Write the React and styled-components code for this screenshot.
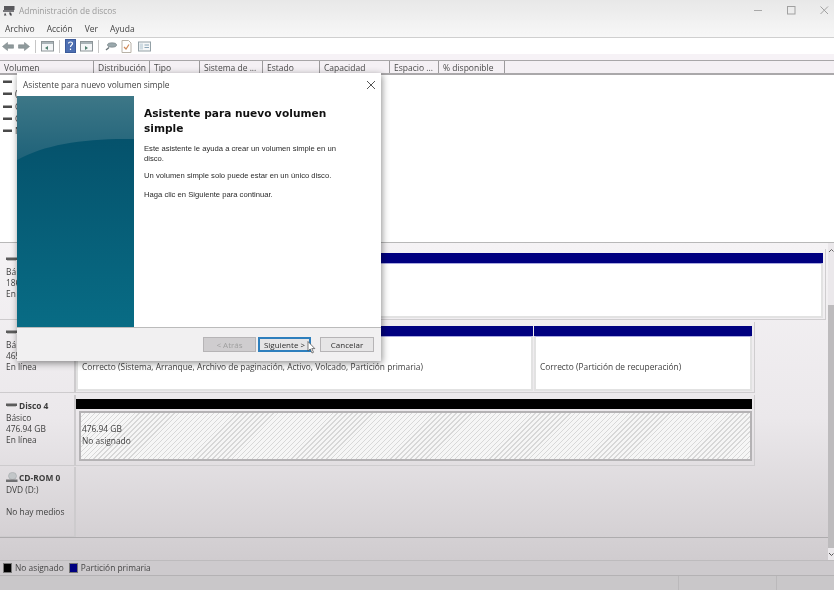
import React from 'react';
import styled, { createGlobalStyle } from 'styled-components';

const Global = createGlobalStyle`
  html, body { margin: 0; padding: 0; background: #fff; width: 838px; height: 590px; overflow: hidden; }
  * { box-sizing: border-box; }
`;
const Page = styled.div`
  position: relative; width: 834px; height: 590px; overflow: hidden; filter: blur(0.45px);
  font-family: "Open Sans", "Noto Sans", sans-serif; font-size: 8.4px; color: #3a3a3a;
  display: flex; flex-direction: column;
  background: #d2ced1;
`;
const TitleBar = styled.div`
  height: 20px; flex: none; display: flex; align-items: center; padding: 0 5px 0 3px; gap: 4px;
  background: linear-gradient(#e8e8e8, #f0f0f0); color: #9a9a9a;
`;
const TitleText = styled.span`flex: 1;`;
const WinBtn = styled.span`
  width: 9px; margin-left: 20px; display: flex; justify-content: center; align-items: center;
`;
const MenuBar = styled.div`
  height: 18px; flex: none; display: flex; align-items: center; gap: 12px; padding: 0 0 0 5px;
  background: linear-gradient(#f1f1f1, #f7f7f7); border-bottom: 1px solid #cfcfcf;
  color: #444; font-size: 8.5px;
`;
const Toolbar = styled.div`
  height: 16px; flex: none; display: flex; align-items: center; gap: 4px; padding: 0 0 0 2px; background: #fff;
`;
const Sep = styled.span`width: 1px; height: 13px; background: #c6c6c6; margin: 0 1px;`;
const Spacer = styled.div`height: 6px; flex: none; background: #f6f2f6;`;
const Header = styled.div`
  height: 15px; flex: none; display: flex; background: #f4f0f4; border-top: 1px solid #a8a6a8; border-bottom: 2px solid #aaa8aa;
`;
const Col = styled.div`
  width: ${p => p.$w}px; padding-left: 4px; border-right: 1px solid #9c9a9c; line-height: 13px;
  color: #4a4a4a; font-size: 8.5px; white-space: nowrap; overflow: hidden;
`;
const List = styled.div`
  height: 168px; flex: none; background: #fff; border-bottom: 1px solid #b8b8b8; padding: 1px 0 0 3px;
  display: flex; flex-direction: column;
`;
const ListRow = styled.div`
  height: 12.3px; display: flex; align-items: center; gap: 3px; color: #444; line-height: 12px;
`;
const Pane = styled.div`
  height: 317px; flex: none; display: flex; background: linear-gradient(#f5f3f5, #ebe8eb 55%, #d0cccf);
`;
const Rows = styled.div`
  flex: 1; padding-top: 6px; display: flex; flex-direction: column; gap: 2px; min-width: 0;
`;
const Row = styled.div`
  height: 71px; flex: none; display: flex;
  border-bottom: ${p => p.$last ? '1px solid #aeacae' : 'none'};
  margin-top: ${p => p.$last ? '-1px' : '0'};
`;
const Info = styled.div`
  width: 76px; flex: none; padding: 4px 0 0 6px; border-right: 2px solid #cdcbcd; border-bottom: 1px solid #cdcbcd;
  line-height: 11px; color: #404040;
`;
const DiskName = styled.div`
  display: flex; align-items: center; gap: 1px; height: 12px; margin-bottom: 1px; font-weight: 700; color: #3c3c3c;
`;
const Blank = styled.div`height: 11px;`;
const Vols = styled.div`
  width: ${p => p.$w}px; display: flex; gap: 1px; padding: 4px 2px 1px 0; border-right: 1px solid #cfcdcf; border-bottom: 1px solid #cfcdcf;
`;
const Vol = styled.div`
  flex: ${p => p.$w ? `0 0 ${p.$w}px` : 1}; display: flex; flex-direction: column; min-width: 0;
`;
const VolHead = styled.div`
  height: 10px; background: ${p => p.$c}; flex: none;
`;
const VolBody = styled.div`
  flex: 1; background: #fff; border: 2px solid #e2e2e2; border-top: 1px solid #a9a9e0; padding: 24px 0 0 4px; line-height: 12px; color: #3e3e3e;
  white-space: nowrap;
`;
const Hatch = styled(VolBody)`
  margin: 2px 0 3px 3px; border: 2px solid #b4b2b4; padding: 10px 0 0 1px;
  background: repeating-linear-gradient(135deg, #f6f6f6 0 2.5px, #d8d8d8 2.5px 3.5px);
`;
const Scroll = styled.div`
  width: 6px; flex: none; background: #ebe8eb; display: flex; flex-direction: column; position: relative;
`;
const ScrollGap = styled.div`height: 62px;`;
const Thumb = styled.div`flex: 1; background: #bdbbbd; margin-bottom: 12px;`;
const ScrollArrow = styled.svg`
  position: absolute; left: 0; top: ${p => p.$top}px;
`;
const Legend = styled.div`
  height: 15px; flex: none; display: flex; align-items: center; padding: 0 0 1px 3px; gap: 3px; background: #cdcacd; border-top: 1px solid #bdbbbd;
  color: #454545;
`;
const Key = styled.span`width: 9px; height: 10px; background: ${p => p.$c}; border: 1px solid #777;`;
const LegendLabel = styled.span`margin-right: 2px; white-space: nowrap;`;
const Bottom = styled.div`
  height: 15px; flex: none; background: #c9c7c9; border-top: 1px solid #b4b2b4; display: flex;
`;
const Cell = styled.div`
  width: ${p => p.$w}px; border-right: 1px solid #bbb9bb;
`;
const Dialog = styled.div`
  position: absolute; left: 17px; top: 73px; width: 364px; height: 288px; background: #fff;
  box-shadow: 1px 2px 7px rgba(0,0,0,.45); display: flex; flex-direction: column;
`;
const DlgTitle = styled.div`
  height: 23px; flex: none; display: flex; align-items: center; justify-content: space-between; padding: 0 5px 0 6px; color: #444;
`;
const DlgMain = styled.div`flex: 1; display: flex; min-height: 0; border-bottom: 1px solid #bbb;`;
const Banner = styled.svg`
  width: 117px; height: 231px; flex: none; display: block;
`;
const DlgBody = styled.div`
  flex: 1; padding: 10px 25px 0 10px; font-family: "Liberation Sans", sans-serif; font-size: 7.65px; color: #2a2a2a; line-height: 10px;
`;
const H1 = styled.div`
  font-family: "DejaVu Sans", sans-serif; font-weight: 700; font-size: 10.6px; line-height: 14.5px; color: #111; margin-bottom: 9px;
`;
const P = styled.p`margin: 0 0 ${p => p.$mb}px;`;
const DlgFoot = styled.div`
  height: 33px; flex: none; background: #f1f0f1; display: flex; align-items: center; padding: 0 7px 0 186px;
`;
const Btn = styled.div`
  width: ${p => p.$w}px; height: 15px; margin-right: ${p => p.$mr || 0}px; display: flex; align-items: center; justify-content: center;
  font-size: 8px; position: relative;
  color: ${p => p.$off ? '#a0a0a0' : '#2e2e2e'};
  background: ${p => p.$off ? '#cfcdcf' : '#e6e5e6'};
  border: ${p => p.$def ? '2px solid #2e7fbd' : '1px solid #b6b4b6'};
`;
const Cursor = styled.svg`position: absolute; left: 47px; top: 2px;`;
const ConsoleSvg = styled.svg`margin-left: 2px;`;
const ArrowSvg = styled.svg`transform: ${p => p.$flip ? 'scaleX(-1)' : 'none'};`;
const ListMark = styled.svg`flex: none; display: block;`;

const Arrow = ({ flip }) => (
  <ArrowSvg $flip={flip} width="12" height="11" viewBox="0 0 12 11">
    <path d="M.5 5.5L5.5 1.5V3.8H11.5V7.2H5.5V9.5Z" fill="#8f9a9c" stroke="#7f8a8c" strokeWidth=".6" />
  </ArrowSvg>
);
const PanelIcon = ({ mark }) => (
  <svg width="13" height="12" viewBox="0 0 13 12">
    <rect x=".5" y="1.5" width="12" height="9.5" fill="#f4f6f7" stroke="#8d9598" />
    <rect x="1" y="2" width="11" height="2" fill="#aab4b8" />
    <path d={mark} fill="#4f7f6f" />
  </svg>
);
const HelpIcon = () => (
  <svg width="11" height="14" viewBox="0 0 11 14">
    <rect x=".5" y=".5" width="10" height="13" fill="#4d6fb2" stroke="#3c5a9a" />
    <path d="M3.5 4.5C3.5 2.5 7.5 2.5 7.5 4.5C7.5 6 5.5 6 5.5 8M5.5 9.5V11" stroke="#fff" strokeWidth="1.2" fill="none" />
  </svg>
);
const KeyIcon = () => (
  <svg width="13" height="12" viewBox="0 0 13 12">
    <path d="M2 10L5 7.5" stroke="#6a7478" strokeWidth="1.4" />
    <ellipse cx="8" cy="5" rx="4.5" ry="2.2" fill="#9aa8ac" stroke="#6f7b80" strokeWidth=".6" />
  </svg>
);
const CheckDoc = () => (
  <svg width="11" height="13" viewBox="0 0 11 13">
    <path d="M1 .5H7.5L10 3V12.5H1Z" fill="#fff" stroke="#b9b2a8" />
    <path d="M3 7L5 9L8 4.5" stroke="#d08a58" strokeWidth="1.2" fill="none" />
  </svg>
);
const ConsoleIcon = () => (
  <ConsoleSvg width="13" height="11" viewBox="0 0 13 11">
    <rect x=".5" y="1" width="12" height="9" fill="#f5f7f8" stroke="#93a0a6" />
    <rect x="1.5" y="2.5" width="3.5" height="6" fill="#cfdbe2" />
    <path d="M6.5 4H11M6.5 6.5H11" stroke="#8ba6b8" />
  </ConsoleSvg>
);
const AppIcon = () => (
  <svg width="12" height="11" viewBox="0 0 12 11">
    <rect x="1" y="1" width="10.5" height="4" fill="#58585c" />
    <rect x="0" y="5" width="11" height="2" fill="#77777b" />
    <path d="M2 7.5L1 10.5H3.5ZM6 7.5H8L9 10.5H7Z" fill="#4a4a4e" />
  </svg>
);
const DiskGlyph = () => (
  <svg width="12" height="6" viewBox="0 0 12 6"><rect x="0" y="1.5" width="11" height="2.5" fill="#5c5c5c" /><rect x="1" y="4" width="9" height="1" fill="#bbb" /></svg>
);
const CdGlyph = () => (
  <svg width="12" height="11" viewBox="0 0 12 11">
    <ellipse cx="6.5" cy="4" rx="4" ry="3.6" fill="#c2c6c8" stroke="#9ba0a2" strokeWidth=".5" />
    <rect x="0" y="7.5" width="11.5" height="2.5" fill="#707072" />
  </svg>
);
const ListGlyph = () => <ListMark width="9" height="4" viewBox="0 0 9 4"><rect width="9" height="2.5" y=".5" fill="#4a4a4a" /></ListMark>;

const cols = [
  ['Volumen', 94], ['Distribución', 56], ['Tipo', 50], ['Sistema de ...', 63], ['Estado', 57], ['Capacidad', 70], ['Espacio ...', 49], ['% disponible', 66],
];
const listRows = ['', '(', 'C', 'C', 'N'];

export default function App() {
  return (
    <Page>
      <Global />
      <TitleBar>
        <AppIcon />
        <TitleText>Administración de discos</TitleText>
        <WinBtn><svg width="9" height="9" viewBox="0 0 9 9"><path d="M0 4.5H8" stroke="#a8a8a8" /></svg></WinBtn>
        <WinBtn><svg width="9" height="9" viewBox="0 0 9 9"><rect x=".5" y=".5" width="7.5" height="7.5" fill="none" stroke="#a0a0a0" /></svg></WinBtn>
        <WinBtn><svg width="9" height="9" viewBox="0 0 9 9"><path d="M.5.5L8 8M8 .5L.5 8" stroke="#a0a0a0" /></svg></WinBtn>
      </TitleBar>
      <MenuBar>
        <span>Archivo</span><span>Acción</span><span>Ver</span><span>Ayuda</span>
      </MenuBar>
      <Toolbar>
        <Arrow /><Arrow flip /><Sep />
        <PanelIcon mark="M7 6L4 8L7 10Z" /><Sep />
        <HelpIcon /><PanelIcon mark="M5 6L8 8L5 10Z" /><Sep />
        <KeyIcon /><CheckDoc /><ConsoleIcon />
      </Toolbar>
      <Spacer />
      <Header>
        {cols.map(([t, w]) => <Col key={t} $w={w}>{t}</Col>)}
      </Header>
      <List>
        {listRows.map((t, i) => <ListRow key={i}><ListGlyph />{t}</ListRow>)}
      </List>
      <Pane>
        <Rows>
          <Row>
            <Info>
              <DiskName><DiskGlyph /></DiskName>
              <div>Bá</div><div>186</div><div>En</div>
            </Info>
            <Vols $w={750}>
              <Vol><VolHead $c="#000080" /><VolBody /></Vol>
            </Vols>
          </Row>
          <Row>
            <Info>
              <DiskName><DiskGlyph /></DiskName>
              <div>Bá</div><div>465</div><div>En línea</div>
            </Info>
            <Vols $w={679}>
              <Vol $w={457}><VolHead $c="#000080" /><VolBody>Correcto (Sistema, Arranque, Archivo de paginación, Activo, Volcado, Partición primaria)</VolBody></Vol>
              <Vol><VolHead $c="#000080" /><VolBody>Correcto (Partición de recuperación)</VolBody></Vol>
            </Vols>
          </Row>
          <Row>
            <Info>
              <DiskName><DiskGlyph />Disco 4</DiskName>
              <div>Básico</div><div>476.94 GB</div><div>En línea</div>
            </Info>
            <Vols $w={679}>
              <Vol><VolHead $c="#000" /><Hatch>476.94 GB<br />No asignado</Hatch></Vol>
            </Vols>
          </Row>
          <Row $last>
            <Info>
              <DiskName><CdGlyph />CD-ROM 0</DiskName>
              <div>DVD (D:)</div><Blank /><div>No hay medios</div>
            </Info>
          </Row>
        </Rows>
        <Scroll>
          <ScrollArrow $top={5} width="6" height="5" viewBox="0 0 6 5"><path d="M1 4L3.5 1.5L5.5 3.5" fill="none" stroke="#666" /></ScrollArrow>
          <ScrollGap /><Thumb />
          <ScrollArrow $top={309} width="6" height="5" viewBox="0 0 6 5"><path d="M1 1L3.5 3.5L5.5 1.5" fill="none" stroke="#555" /></ScrollArrow>
        </Scroll>
      </Pane>
      <Legend>
        <Key $c="#000" /><LegendLabel>No asignado</LegendLabel>
        <Key $c="#000080" /><LegendLabel>Partición primaria</LegendLabel>
      </Legend>
      <Bottom><Cell $w={679} /><Cell $w={98} /></Bottom>
      <Dialog>
        <DlgTitle>
          <span>Asistente para nuevo volumen simple</span>
          <svg width="10" height="10" viewBox="0 0 10 10"><path d="M1 1L9 9M9 1L1 9" stroke="#555" /></svg>
        </DlgTitle>
        <DlgMain>
          <Banner viewBox="0 0 117 231" preserveAspectRatio="none">
            <defs>
              <linearGradient id="bannerBase" x1="0" y1="0" x2="0" y2="1"><stop offset="0" stopColor="#044c66" /><stop offset="1" stopColor="#086c85" /></linearGradient>
              <linearGradient id="bannerCap" x1="0" y1="0" x2="0" y2="1"><stop offset="0" stopColor="#3d7787" /><stop offset="1" stopColor="#1f6279" /></linearGradient>
            </defs>
            <rect width="117" height="231" fill="url(#bannerBase)" />
            <path d="M0 64C28 48 70 42 117 43V0H0Z" fill="url(#bannerCap)" />
          </Banner>
          <DlgBody>
            <H1>Asistente para nuevo volumen simple</H1>
            <P $mb={7}>Este asistente le ayuda a crear un volumen simple en un disco.</P>
            <P $mb={9}>Un volumen simple solo puede estar en un único disco.</P>
            <P $mb={0}>Haga clic en Siguiente para continuar.</P>
          </DlgBody>
        </DlgMain>
        <DlgFoot>
          <Btn $w={53} $mr={2} $off>&lt; Atrás</Btn>
          <Btn $w={53} $mr={9} $def>Siguiente &gt;
            <Cursor width="9" height="13" viewBox="0 0 9 13"><path d="M1 .5V10L3.2 8L5 12L6.5 11.3L4.8 7.6H7.8Z" fill="#fff" stroke="#444" strokeWidth=".7" /></Cursor>
          </Btn>
          <Btn $w={54}>Cancelar</Btn>
        </DlgFoot>
      </Dialog>
    </Page>
  );
}
